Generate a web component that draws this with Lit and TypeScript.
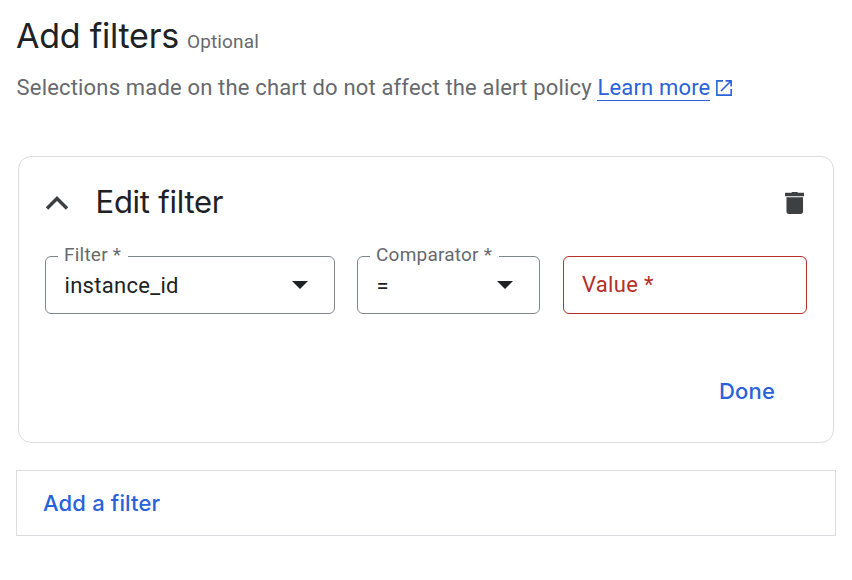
import { LitElement, html, css } from "lit";
import { customElement, property } from "lit/decorators.js";

@customElement("outlined-field")
class OutlinedField extends LitElement {
  @property() label = "";
  @property() value = "";
  @property({ type: Boolean, reflect: true }) invalid = false;

  static styles = css`
    :host {
      display: flex;
      position: relative;
      box-sizing: border-box;
      height: 58px;
      align-items: center;
      justify-content: space-between;
      border: 1px solid #80868b;
      border-radius: 6px;
      padding: 0 26px 0 18.5px;
      font: 22px/28px Roboto, sans-serif;
      letter-spacing: 0.3px;
      color: #202124;
    }
    :host([invalid]) {
      padding-left: 18px;
      border-color: #b5302a;
      color: #b5302a;
    }
    .value {
      padding-top: 2px;
    }
    .label {
      position: absolute;
      left: 12px;
      top: -14px;
      padding: 0 6.5px 0 6px;
      background: #fff;
      color: #66696e;
      font-size: 19px;
      line-height: 24px;
      letter-spacing: 0.22px;
      white-space: nowrap;
    }
    .arrow {
      width: 16px;
      height: 8px;
      fill: #202124;
    }
  `;

  render() {
    return this.invalid
      ? html`<span class="text">${this.label}</span>`
      : html`<span class="label">${this.label}</span>
          <span class="value">${this.value}</span>
          <svg class="arrow" viewBox="0 0 16 8"><path d="M0 0h16L8 8z" /></svg>`;
  }
}

@customElement("app-root")
class AppRoot extends LitElement {
  static styles = css`
    :host {
      display: block;
      box-sizing: border-box;
      height: 580px;
      padding: 16px 16px 0;
      background: #fff;
      color: #202124;
      font-family: Roboto, sans-serif;
    }
    .heading {
      display: flex;
      align-items: baseline;
      gap: 8px;
      height: 40px;
    }
    h1, h2 {
      margin: 0;
      font-family: Inter, sans-serif;
      font-weight: 400;
      white-space: nowrap;
    }
    h1 {
      font-size: 34px;
      line-height: 40px;
      letter-spacing: -0.24px;
    }
    .optional {
      font-size: 19px;
      letter-spacing: 0.15px;
      color: #66696e;
    }
    .intro {
      display: flex;
      align-items: center;
      margin: 16px 0 0 0.6px;
      height: 32px;
      font-size: 22px;
      letter-spacing: 0.17px;
      color: #66696e;
      white-space: pre;
    }
    .copy {
      padding-bottom: 2px;
    }
    .link {
      color: #2962d9;
      border-bottom: 1px solid #2962d9;
      line-height: 25px;
      text-decoration: none;
    }
    .external {
      width: 16px;
      height: 16px;
      margin-left: 5.5px;
      fill: none;
      stroke: #2962d9;
      stroke-width: 1.6;
    }
    .card {
      box-sizing: border-box;
      height: 287px;
      margin: 52px 2px 0;
      padding: 25px 26px 0;
      border: 1px solid #dadce0;
      border-radius: 13px;
    }
    .title {
      display: flex;
      align-items: center;
      height: 40px;
    }
    h2 {
      flex: 1;
      margin-left: 26.5px;
      font-size: 31px;
      line-height: 40px;
      letter-spacing: -0.25px;
    }
    .chevron {
      width: 24px;
      height: 16px;
      padding-top: 2px;
      fill: none;
      stroke: #3c4043;
      stroke-width: 3.4;
    }
    .trash {
      width: 19.5px;
      height: 24px;
      margin-right: 3px;
      padding-top: 1px;
      fill: #3c4043;
    }
    .fields {
      display: grid;
      grid-template-columns: 290px 183px 244px;
      margin-top: 34px;
      justify-content: space-between;
    }
    .fields outlined-field:nth-child(2) {
      margin: 0 0.5px 0 -0.5px;
    }
    .actions {
      display: flex;
      justify-content: flex-end;
      margin: 57px 32px 0 0;
    }
    .button {
      padding: 0;
      border: 0;
      background: none;
      color: #2962d9;
      font: 500 22px/40px Inter, sans-serif;
      letter-spacing: 0.16px;
    }
    .add {
      display: flex;
      align-items: center;
      box-sizing: border-box;
      height: 66px;
      margin-top: 27px;
      padding-left: 26px;
      border: 1px solid #dadce0;
    }
  `;

  render() {
    return html`
      <div class="heading"><h1>Add filters</h1><span class="optional">Optional</span></div>
      <p class="intro"><span class="copy">Selections made on the chart do not affect the alert policy </span><a class="link">Learn more</a><svg class="external" viewBox="0 0 16 16"><path d="M7 .85H.85v14.3h14.3V9M9.5 .85h5.65V6.5M15 1 5 11" /></svg></p>
      <section class="card">
        <div class="title">
          <svg class="chevron" viewBox="0 0 24 16"><path d="M2 13.5 12 3.5l10 10" /></svg>
          <h2>Edit filter</h2>
          <svg class="trash" viewBox="0 0 20 24"><path d="M6.5 1.5 7.5 .6h5l1 .9H20V5H0V1.5zM1.5 6.2h17V20.500a2.700 2.700 0 0 1-2.700 2.700H4.200a2.700 2.700 0 0 1-2.700-2.700z" /></svg>
        </div>
        <div class="fields">
          <outlined-field label="Filter *" value="instance_id"></outlined-field>
          <outlined-field label="Comparator *" value="="></outlined-field>
          <outlined-field label="Value *" invalid></outlined-field>
        </div>
        <div class="actions"><button class="button">Done</button></div>
      </section>
      <div class="add"><button class="button">Add a filter</button></div>
    `;
  }
}
